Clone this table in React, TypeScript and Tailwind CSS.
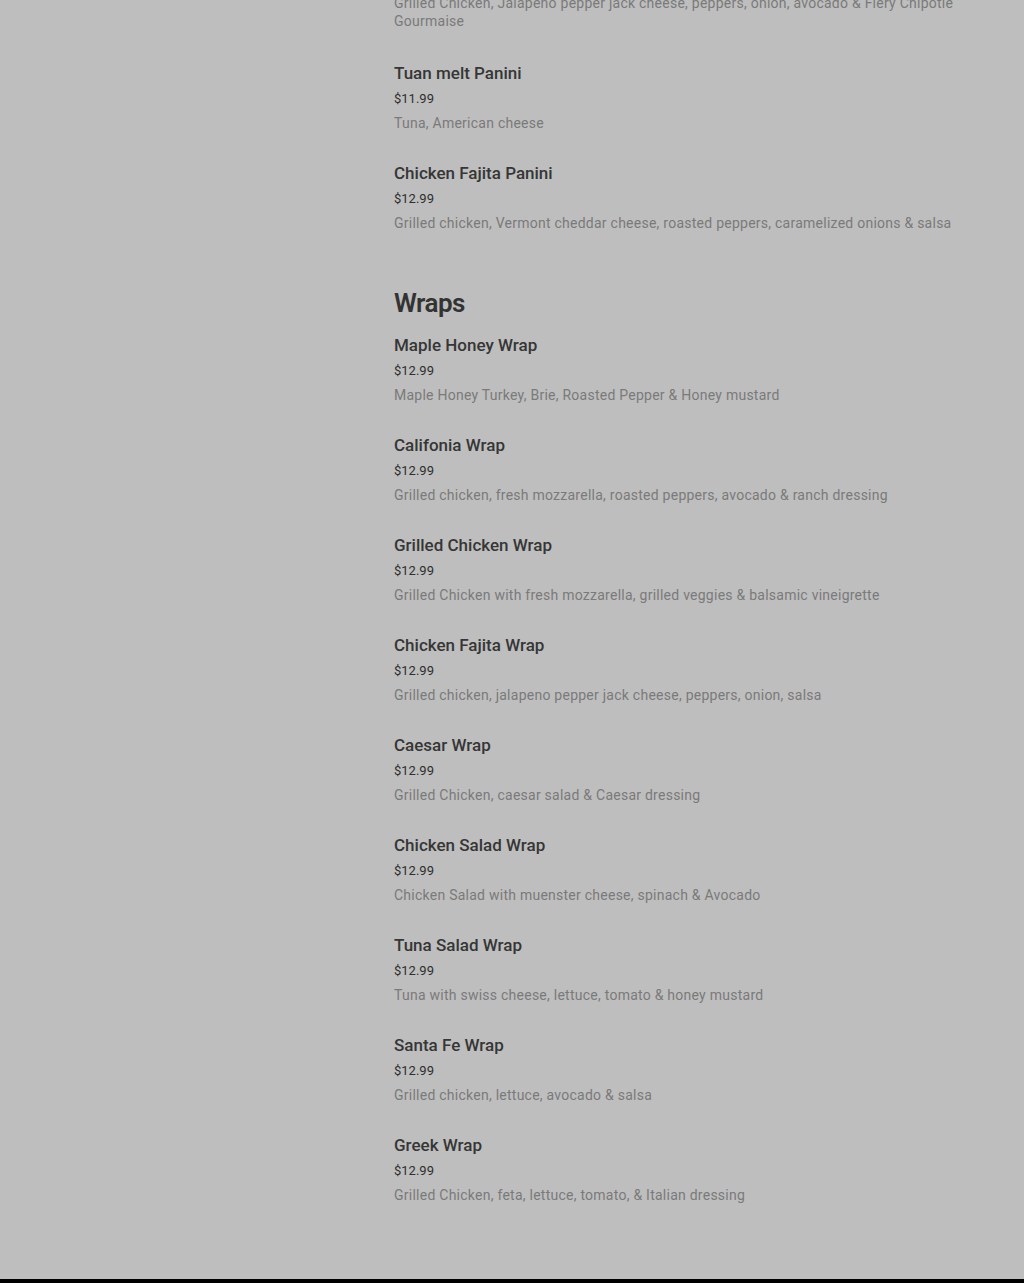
import React from "react";

type Item = { name: string; price: string; desc: string };

const panini: Item[] = [
  {
    name: "Tuan melt Panini",
    price: "$11.99",
    desc: "Tuna, American cheese",
  },
  {
    name: "Chicken Fajita Panini",
    price: "$12.99",
    desc: "Grilled chicken, Vermont cheddar cheese, roasted peppers, caramelized onions & salsa",
  },
];

const wraps: Item[] = [
  { name: "Maple Honey Wrap", price: "$12.99", desc: "Maple Honey Turkey, Brie, Roasted Pepper & Honey mustard" },
  { name: "Califonia Wrap", price: "$12.99", desc: "Grilled chicken, fresh mozzarella, roasted peppers, avocado & ranch dressing" },
  { name: "Grilled Chicken Wrap", price: "$12.99", desc: "Grilled Chicken with fresh mozzarella, grilled veggies & balsamic vineigrette" },
  { name: "Chicken Fajita Wrap", price: "$12.99", desc: "Grilled chicken, jalapeno pepper jack cheese, peppers, onion, salsa" },
  { name: "Caesar Wrap", price: "$12.99", desc: "Grilled Chicken, caesar salad & Caesar dressing" },
  { name: "Chicken Salad Wrap", price: "$12.99", desc: "Chicken Salad with muenster cheese, spinach & Avocado" },
  { name: "Tuna Salad Wrap", price: "$12.99", desc: "Tuna with swiss cheese, lettuce, tomato & honey mustard" },
  { name: "Santa Fe Wrap", price: "$12.99", desc: "Grilled chicken, lettuce, avocado & salsa" },
  { name: "Greek Wrap", price: "$12.99", desc: "Grilled Chicken, feta, lettuce, tomato, & Italian dressing" },
];

function MenuItem({ item }: { item: Item }) {
  return (
    <div className="flex flex-col pb-[29px]">
      <div className="text-[17px] leading-[24px] font-medium text-[#363636]">{item.name}</div>
      <div className="mt-[4px] text-[13px] leading-[20px] text-[#2e2e2e]">{item.price}</div>
      <div className="mt-[5px] text-[14px] leading-[18px] tracking-[0.25px] text-[#7a7a7a]">{item.desc}</div>
    </div>
  );
}

export default function App() {
  return (
    <div
      className="min-h-[1283px] bg-[#bebebe] flex flex-col"
      style={{ fontFamily: "Roboto, 'Noto Sans', sans-serif" }}
    >
      <div className="flex-1 pl-[394px] pr-[40px] mt-[-6px]">
        <div className="pb-[31px] text-[14px] leading-[18px] tracking-[0.25px] text-[#7a7a7a]">
          Grilled Chicken, Jalapeno pepper jack cheese, peppers, onion, avocado & Fiery Chipotle
          <br />
          Gourmaise
        </div>
        {panini.map((it) => (
          <MenuItem key={it.name} item={it} />
        ))}
        <h2 className="mt-[27px] mb-[15px] text-[26px] leading-[30px] font-semibold tracking-[-0.5px] text-[#333333]">
          Wraps
        </h2>
        {wraps.map((it) => (
          <MenuItem key={it.name} item={it} />
        ))}
      </div>
      <div className="h-[4px] bg-black" />
    </div>
  );
}
